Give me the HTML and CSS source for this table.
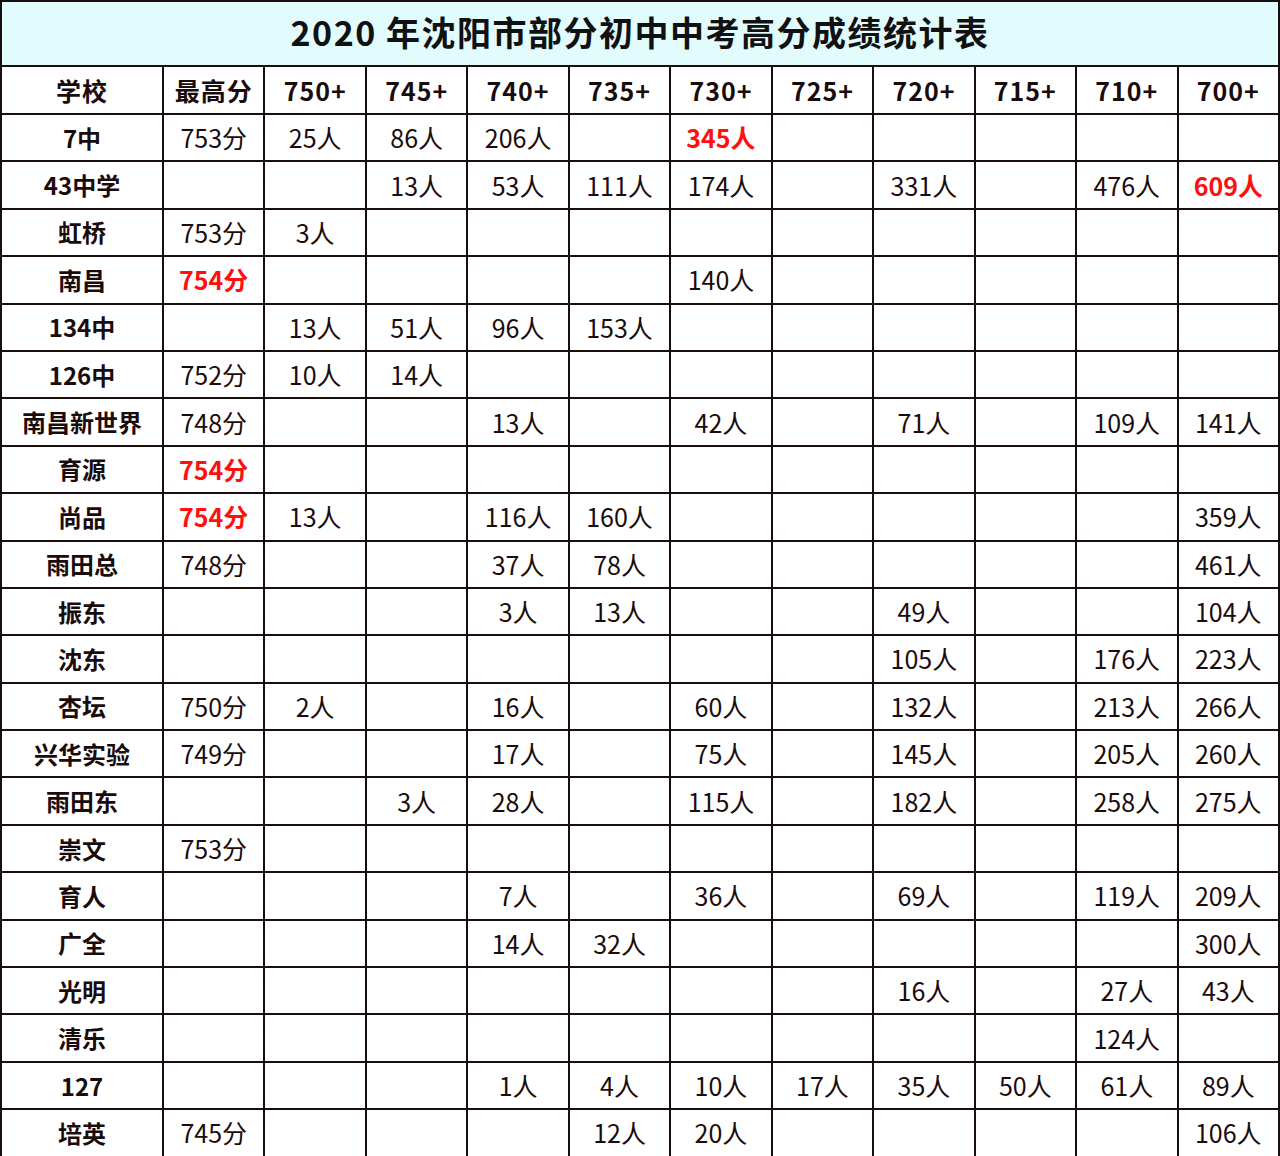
FILE: index.html
```html
<!DOCTYPE html>
<html lang="zh">
<head>
<meta charset="utf-8">
<title>2020 年沈阳市部分初中中考高分成绩统计表</title>
<link rel="stylesheet" href="styles.css">
</head>
<body>
<table class="stats">
<colgroup>
<col class="c-name"><col><col><col><col><col><col><col><col><col><col><col>
</colgroup>
<thead>
<tr class="title-row"><th colspan="12" class="title">2020 年沈阳市部分初中中考高分成绩统计表</th></tr>
<tr class="head-row"><th>学校</th><th>最高分</th><th>750+</th><th>745+</th><th>740+</th><th>735+</th><th>730+</th><th>725+</th><th>720+</th><th>715+</th><th>710+</th><th>700+</th></tr>
</thead>
<tbody>
<tr><th>7中</th><td>753分</td><td>25人</td><td>86人</td><td>206人</td><td></td><td class="hi">345人</td><td></td><td></td><td></td><td></td><td></td></tr>
<tr><th>43中学</th><td></td><td></td><td>13人</td><td>53人</td><td>111人</td><td>174人</td><td></td><td>331人</td><td></td><td>476人</td><td class="hi">609人</td></tr>
<tr><th>虹桥</th><td>753分</td><td>3人</td><td></td><td></td><td></td><td></td><td></td><td></td><td></td><td></td><td></td></tr>
<tr><th>南昌</th><td class="hi">754分</td><td></td><td></td><td></td><td></td><td>140人</td><td></td><td></td><td></td><td></td><td></td></tr>
<tr><th>134中</th><td></td><td>13人</td><td>51人</td><td>96人</td><td>153人</td><td></td><td></td><td></td><td></td><td></td><td></td></tr>
<tr><th>126中</th><td>752分</td><td>10人</td><td>14人</td><td></td><td></td><td></td><td></td><td></td><td></td><td></td><td></td></tr>
<tr><th>南昌新世界</th><td>748分</td><td></td><td></td><td>13人</td><td></td><td>42人</td><td></td><td>71人</td><td></td><td>109人</td><td>141人</td></tr>
<tr><th>育源</th><td class="hi">754分</td><td></td><td></td><td></td><td></td><td></td><td></td><td></td><td></td><td></td><td></td></tr>
<tr><th>尚品</th><td class="hi">754分</td><td>13人</td><td></td><td>116人</td><td>160人</td><td></td><td></td><td></td><td></td><td></td><td>359人</td></tr>
<tr><th>雨田总</th><td>748分</td><td></td><td></td><td>37人</td><td>78人</td><td></td><td></td><td></td><td></td><td></td><td>461人</td></tr>
<tr><th>振东</th><td></td><td></td><td></td><td>3人</td><td>13人</td><td></td><td></td><td>49人</td><td></td><td></td><td>104人</td></tr>
<tr><th>沈东</th><td></td><td></td><td></td><td></td><td></td><td></td><td></td><td>105人</td><td></td><td>176人</td><td>223人</td></tr>
<tr><th>杏坛</th><td>750分</td><td>2人</td><td></td><td>16人</td><td></td><td>60人</td><td></td><td>132人</td><td></td><td>213人</td><td>266人</td></tr>
<tr><th>兴华实验</th><td>749分</td><td></td><td></td><td>17人</td><td></td><td>75人</td><td></td><td>145人</td><td></td><td>205人</td><td>260人</td></tr>
<tr><th>雨田东</th><td></td><td></td><td>3人</td><td>28人</td><td></td><td>115人</td><td></td><td>182人</td><td></td><td>258人</td><td>275人</td></tr>
<tr><th>崇文</th><td>753分</td><td></td><td></td><td></td><td></td><td></td><td></td><td></td><td></td><td></td><td></td></tr>
<tr><th>育人</th><td></td><td></td><td></td><td>7人</td><td></td><td>36人</td><td></td><td>69人</td><td></td><td>119人</td><td>209人</td></tr>
<tr><th>广全</th><td></td><td></td><td></td><td>14人</td><td>32人</td><td></td><td></td><td></td><td></td><td></td><td>300人</td></tr>
<tr><th>光明</th><td></td><td></td><td></td><td></td><td></td><td></td><td></td><td>16人</td><td></td><td>27人</td><td>43人</td></tr>
<tr><th>清乐</th><td></td><td></td><td></td><td></td><td></td><td></td><td></td><td></td><td></td><td>124人</td><td></td></tr>
<tr><th>127</th><td></td><td></td><td></td><td>1人</td><td>4人</td><td>10人</td><td>17人</td><td>35人</td><td>50人</td><td>61人</td><td>89人</td></tr>
<tr><th>培英</th><td>745分</td><td></td><td></td><td></td><td>12人</td><td>20人</td><td></td><td></td><td></td><td></td><td>106人</td></tr>
</tbody>
</table>
</body>
</html>
```
FILE: styles.css
```css
html, body {
  margin: 0;
  padding: 0;
  background: #ffffff;
}
body {
  font-family: "Noto Sans CJK SC", "Noto Sans", sans-serif;
  color: #1a0c0c;
}
.stats {
  width: 1280px;
  border-collapse: collapse;
  table-layout: fixed;
}
.c-name {
  width: 162px;
}
.stats th,
.stats td {
  border: 2px solid #1a0d0d;
  padding: 0;
  text-align: center;
  vertical-align: middle;
  height: 45.4px;
  line-height: 1;
  font-size: 25px;
  white-space: nowrap;
}
.stats td {
  font-weight: 400;
}
.stats th {
  font-weight: 700;
  font-size: 24px;
}
.title-row .title {
  height: 59px;
  padding-bottom: 4px;
  background: #e2fbfd;
  font-size: 34px;
  font-weight: 700;
  letter-spacing: 1.5px;
  color: #111111;
}
.head-row th {
  height: 46px;
  font-size: 25px;
  letter-spacing: 1px;
}
.stats .hi {
  color: #ff1010;
  font-weight: 700;
}
```
